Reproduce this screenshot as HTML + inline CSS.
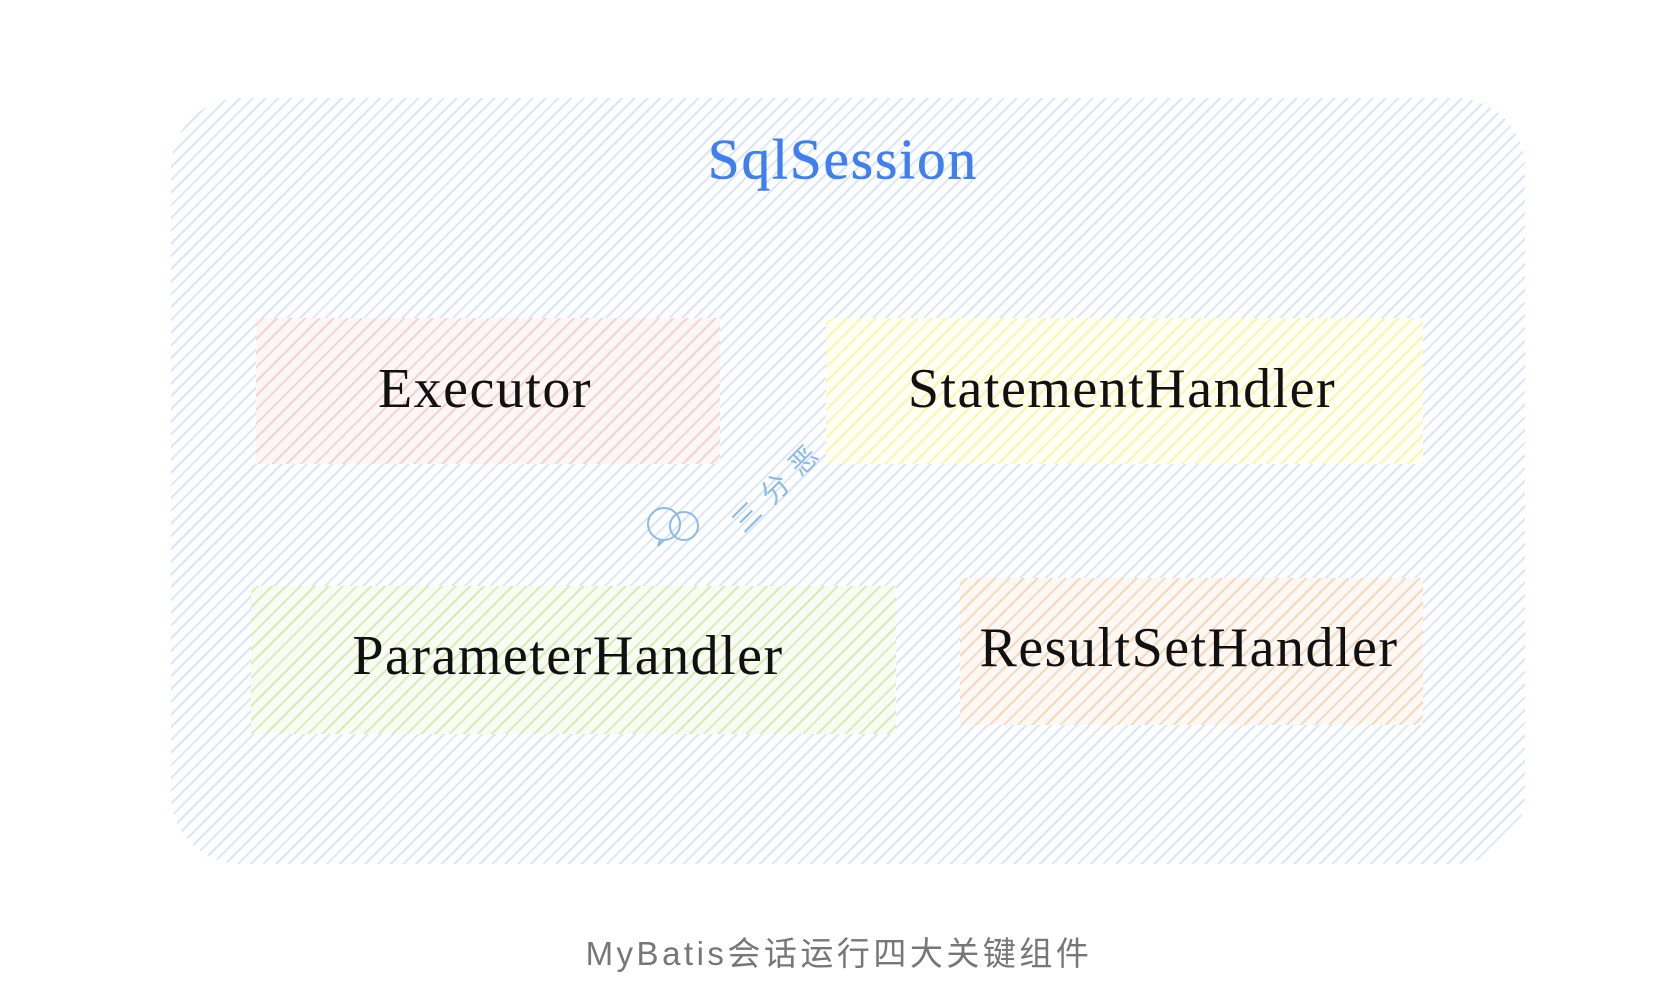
<!DOCTYPE html>
<html><head><meta charset="utf-8"><style>
html,body{margin:0;padding:0;width:1672px;height:1002px;background:#fff;overflow:hidden;position:relative}
.b{position:absolute}
.outer{left:171px;top:98px;width:1354px;height:766px;border-radius:70px;
background:repeating-linear-gradient(135deg,#fff 0 3px,#d8e6f8 3px 5px,#fff 5px 9px);}
.box{position:absolute}
.red{left:256px;top:318px;width:464px;height:146px;background:repeating-linear-gradient(135deg,#fdf6f6 0 4px,#f6d3d3 4px 6px,#fdf6f6 6px 10px)}
.yel{left:826px;top:318px;width:597px;height:146px;background:repeating-linear-gradient(135deg,#fffff6 0 4px,#f9f7a8 4px 6px,#fffff6 6px 10px)}
.grn{left:251px;top:586px;width:645px;height:148px;background:repeating-linear-gradient(135deg,#f8fcf2 0 4px,#d9ecb8 4px 6px,#f8fcf2 6px 10px)}
.org{left:960px;top:578px;width:463px;height:147px;background:repeating-linear-gradient(135deg,#fdf8f3 0 4px,#f6d8bd 4px 6px,#fdf8f3 6px 10px)}
.t{position:absolute;font-family:"Liberation Serif",serif;color:#111;white-space:nowrap;transform:translate(-50%,-50%);font-size:56px;letter-spacing:1.5px}
.cap{position:absolute;left:839px;top:951px;transform:translate(-50%,-50%);font-family:"Liberation Sans","Noto Sans CJK SC",sans-serif;font-size:33px;color:#777;white-space:nowrap;letter-spacing:3.5px}
</style></head><body>
<div class="b outer"></div>
<div class="box red"></div><div class="box yel"></div><div class="box grn"></div><div class="box org"></div>
<div class="t" style="left:843px;top:160px;color:#3f7ff0;font-size:57px;letter-spacing:2px;-webkit-text-stroke:0.6px #3f7ff0">SqlSession</div>
<div class="t" style="left:485px;top:389px">Executor</div>
<div class="t" style="left:1122px;top:389px">StatementHandler</div>
<div class="t" style="left:568px;top:656px">ParameterHandler</div>
<div class="t" style="left:1189px;top:648px">ResultSetHandler</div>
<svg class="b" style="left:644px;top:496px" width="80" height="60" viewBox="0 0 80 60" fill="none" stroke="#8dbbe6" stroke-width="2">
<circle cx="20" cy="28" r="16"/><circle cx="40" cy="30" r="14"/><path d="M16 44 l-2 6 l6 -6"/></svg>
<div class="b" style="left:722px;top:512px;transform:rotate(-45deg);transform-origin:left top;font-family:'Noto Sans CJK SC',sans-serif;font-size:28px;color:#8dbbe6;letter-spacing:12px">三分恶</div>
<div class="cap">MyBatis会话运行四大关键组件</div>
</body></html>
